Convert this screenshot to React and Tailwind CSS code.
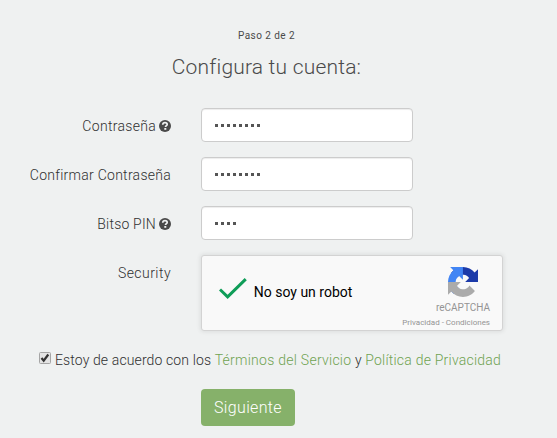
import React from "react";

function Help() {
  return (
    <svg viewBox="0 0 12 12" className="ml-[3px] size-3 shrink-0">
      <circle cx="6" cy="6" r="6" fill="#4a4a4a" />
      <path d="M3.7 4.7C3.8 3.2 4.8 2.6 6 2.6s2.2.7 2.2 1.8C8.2 5.6 6.5 5.7 6.5 7" fill="none" stroke="#eff1f1" strokeWidth="1.7" />
      <rect x="5.3" y="8" width="2" height="1.8" fill="#eff1f1" />
    </svg>
  );
}

function Label({ children }) {
  return <div className="flex h-[34px] w-[171px] items-center justify-end whitespace-nowrap pt-0.5 text-sm font-light text-[#303030]">{children}</div>;
}

function Password({ count }) {
  return (
    <div className="flex h-[34px] w-[212px] items-center gap-[3px] rounded border border-[#ccc] bg-white pl-[13px] shadow-[inset_0_1px_1px_rgba(0,0,0,0.075)]">
      {Array.from({ length: count }, (_, i) => (
        <span key={i} className="size-[3px] bg-[#555]" />
      ))}
    </div>
  );
}

function CaptchaLogo() {
  return (
    <svg viewBox="0 0 64 64" className="size-[30px]">
      <path fill="#1c3aa9" d="M64 31.955l-.033-1.37V4.687l-7.16 7.16C50.948 4.674 42.033.093 32.05.093c-10.4 0-19.622 4.96-25.458 12.64l11.736 11.86a15.55 15.55 0 0 1 4.754-5.334c2.05-1.6 4.952-2.906 8.968-2.906.485 0 .86.057 1.135.163 4.976.393 9.288 3.14 11.828 7.124l-8.307 8.307L64 31.953" />
      <path fill="#4285f4" d="M31.862.094l-1.37.033H4.594l7.16 7.16C4.58 13.147 0 22.06 0 32.046c0 10.4 4.96 19.622 12.64 25.458L24.5 45.768a15.55 15.55 0 0 1-5.334-4.754c-1.6-2.05-2.906-4.952-2.906-8.968 0-.485.057-.86.163-1.135.393-4.976 3.14-9.288 7.124-11.828l8.307 8.307L31.86.095" />
      <path fill="#ababab" d="M.001 32.045l.033 1.37v25.898l7.16-7.16c5.86 7.173 14.774 11.754 24.76 11.754 10.4 0 19.622-4.96 25.458-12.64l-11.736-11.86a15.55 15.55 0 0 1-4.754 5.334c-2.05 1.6-4.952 2.906-8.968 2.906-.485 0-.86-.057-1.135-.163-4.976-.393-9.288-3.14-11.828-7.124l8.307-8.307c-10.522.04-22.4.066-27.295-.005" />
    </svg>
  );
}

export default function App() {
  return (
    <div className="flex h-[438px] w-[557px] flex-col overflow-hidden bg-[#eff1f1] font-['Roboto',sans-serif] text-[#4a4a4a]">
      <div className="flex h-[108px] w-[533px] flex-col items-center whitespace-nowrap pt-7">
        <div className="text-[10px] leading-4 tracking-[0.45px]">Paso 2 de 2</div>
        <h1 className="mt-[9px] text-[21px] font-light leading-7 tracking-[0.2px]">Configura tu cuenta:</h1>
      </div>
      <div className="flex flex-col gap-[15px]">
        <div className="flex gap-[30px]">
          <Label><span className="tracking-[0.3px]">Contraseña</span><Help /></Label>
          <Password count={8} />
        </div>
        <div className="flex gap-[30px]">
          <Label><span className="tracking-[0.27px]">Confirmar Contraseña</span></Label>
          <Password count={8} />
        </div>
        <div className="flex gap-[30px]">
          <Label><span className="tracking-[0.2px]">Bitso PIN</span><Help /></Label>
          <Password count={4} />
        </div>
        <div className="flex gap-[30px]">
          <Label><span className="tracking-[0.45px]">Security</span></Label>
          <div className="flex h-[76px] w-[302px] rounded-[3px] border border-[#d3d3d3] bg-[#f9f9f9] shadow-[0_0_4px_1px_rgba(0,0,0,0.08)]">
            <svg viewBox="0 0 28 22" className="ml-[17px] mt-[22px] h-[22px] w-7">
              <path d="M1 11.5l7.7 7.5L27 1" fill="none" stroke="#0f9d58" strokeWidth="3" />
            </svg>
            <div className="ml-[7px] mt-[26px] w-[150px] text-sm leading-5 text-black">No soy un robot</div>
            <div className="flex flex-1 flex-col items-end whitespace-nowrap pr-3 pt-[11px] text-[#949494]">
              <div className="mr-3"><CaptchaLogo /></div>
              <div className="mt-[5px] text-[10px] leading-3">reCAPTCHA</div>
              <div className="mt-[3px] text-[8px] leading-3">Privacidad - Condiciones</div>
            </div>
          </div>
        </div>
      </div>
      <div className="mt-[19px] flex h-5 items-center whitespace-nowrap pl-[39px] text-sm font-light text-[#303030]">
        <svg viewBox="0 0 12 12" className="-mt-1 mr-1 size-3">
          <rect x=".5" y=".5" width="11" height="11" rx="1" fill="#e4e4e4" stroke="#a5a5a5" />
          <path d="M2.5 6l2.2 2.7L9.3 2.5" fill="none" stroke="#333" strokeWidth="2.2" />
        </svg>
        <span className="tracking-[0.12px]">
          Estoy de acuerdo con los <a className="tracking-[0.26px] text-[#6fa352]">Términos del Servicio</a> y <a className="tracking-[0.22px] text-[#6fa352]">Política de Privacidad</a>
        </span>
      </div>
      <button className="ml-[201px] mt-[19px] h-[37px] w-[94px] shrink-0 rounded bg-[#86b16a] pt-px text-base font-light tracking-[0.35px] text-white">Siguiente</button>
    </div>
  );
}
